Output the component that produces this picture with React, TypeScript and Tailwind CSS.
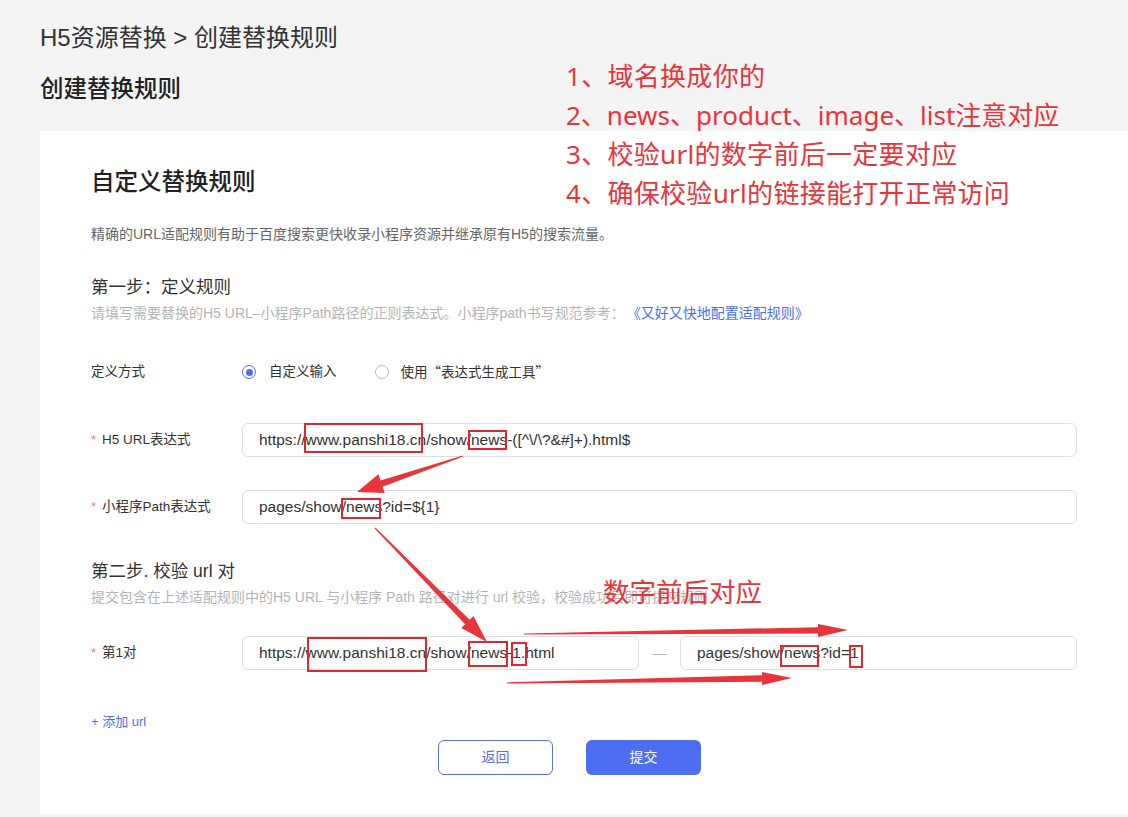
import React from "react";

const UI = { fontFamily: '"Liberation Sans", "Noto Sans CJK SC", sans-serif' };
const RED = { fontFamily: '"Noto Sans", "Noto Sans CJK SC", sans-serif' };
const CJK = { fontFamily: '"Noto Sans CJK SC", sans-serif' };

function arrowPoints(x0: number, y0: number, x1: number, y1: number, hl = 22, hw = 8, sw = 3.2, tw = 0.6) {
  const dx = x1 - x0;
  const dy = y1 - y0;
  const len = Math.hypot(dx, dy);
  const ux = dx / len;
  const uy = dy / len;
  const nx = -uy;
  const ny = ux;
  const bx = x1 - ux * hl;
  const by = y1 - uy * hl;
  const pts = [
    [x0 + nx * tw, y0 + ny * tw],
    [bx + nx * sw, by + ny * sw],
    [bx + nx * hw, by + ny * hw],
    [x1, y1],
    [bx - nx * hw, by - ny * hw],
    [bx - nx * sw, by - ny * sw],
    [x0 - nx * tw, y0 - ny * tw],
  ];
  return pts.map((p) => p[0].toFixed(1) + "," + p[1].toFixed(1)).join(" ");
}

const arrows = [
  { a: [463, 456, 357, 492], hl: 26, hw: 10 },
  { a: [375, 528, 487, 642], hl: 28, hw: 8.5 },
  { a: [524, 634, 848, 630], hl: 30, hw: 6.5 },
  { a: [507, 683, 792, 678], hl: 30, hw: 6.5 },
];

const boxes = [
  { l: 304, t: 423, w: 119, h: 30 },
  { l: 468, t: 430, w: 39, h: 20 },
  { l: 341, t: 498, w: 40, h: 21 },
  { l: 307, t: 637, w: 120, h: 35 },
  { l: 468, t: 641, w: 40, h: 26 },
  { l: 511, t: 642, w: 16, h: 24 },
  { l: 780, t: 645, w: 39, h: 22 },
  { l: 849, t: 645, w: 14, h: 23 },
];

function Label({ children, star = false }: { children: React.ReactNode; star?: boolean }) {
  return (
    <div className="w-[151px] shrink-0 flex items-center text-[13.5px] text-[#333]">
      {star && <span className="w-[11px] text-[#f08080]">*</span>}
      <span>{children}</span>
    </div>
  );
}

function Input({ children, className = "" }: { children: React.ReactNode; className?: string }) {
  return (
    <div
      className={
        "h-[34px] flex items-center rounded-[6px] border border-[#dcdfe6] bg-white pl-[16px] text-[15.5px] text-[#333] whitespace-nowrap " +
        className
      }
    >
      {children}
    </div>
  );
}

export default function App() {
  return (
    <div className="relative h-[817px] overflow-hidden bg-[#f4f4f4]" style={UI}>
      <div className="pl-[40px] pt-[24px]">
        <div className="h-[28px] leading-[28px] text-[24px] text-[#333]">H5资源替换 &gt; 创建替换规则</div>
        <div className="mt-[23px] h-[28px] leading-[28px] text-[23.5px] font-medium text-[#222]">创建替换规则</div>
      </div>

      <div className="ml-[40px] mt-[28px] h-[683px] bg-white pl-[51px] pr-[51px] pt-[35px]">
        <div className="h-[32px] leading-[32px] text-[23.5px] font-medium text-[#222]">自定义替换规则</div>
        <div className="mt-[26px] h-[20px] leading-[20px] text-[14px] text-[#666]">
          精确的URL适配规则有助于百度搜索更快收录小程序资源并继承原有H5的搜索流量。
        </div>

        <div className="mt-[31px] h-[24px] leading-[24px] text-[17.5px] text-[#333]">第一步：定义规则</div>
        <div className="mt-[4px] h-[20px] leading-[20px] text-[14px] text-[#b4b4b4] whitespace-nowrap">
          请填写需要替换的H5 URL–小程序Path路径的正则表达式。小程序path书写规范参考：
          <span className="ml-[9px] text-[#4e6ef2]">《又好又快地配置适配规则》</span>
        </div>

        <div className="mt-[39px] h-[20px] flex items-center">
          <Label>定义方式</Label>
          <div className="flex items-center text-[13.5px] text-[#333]">
            <span className="w-[14px] h-[14px] rounded-full border border-[#4e6ef2] flex items-center justify-center">
              <span className="w-[7px] h-[7px] rounded-full bg-[#4e6ef2]" />
            </span>
            <span className="ml-[13px]">自定义输入</span>
            <span className="ml-[38px] w-[14px] h-[14px] rounded-full border border-[#b8b8b8]" />
            <span className="ml-[12px]">
              使用<span style={CJK}>“</span>表达式生成工具<span style={CJK}>”</span>
            </span>
          </div>
        </div>

        <div className="mt-[41px] flex items-center">
          <Label star>H5 URL表达式</Label>
          <Input className="flex-1">{"https://www.panshi18.cn/show/news-([^\\/\\?&#]+).html$"}</Input>
        </div>

        <div className="mt-[33px] flex items-center">
          <Label star>小程序Path表达式</Label>
          <Input className="flex-1">{"pages/show/news?id=${1}"}</Input>
        </div>

        <div className="mt-[35px] h-[24px] leading-[24px] text-[17.5px] text-[#333]">第二步. 校验 url 对</div>
        <div className="mt-[4px] h-[20px] leading-[20px] text-[14px] text-[#b4b4b4] whitespace-nowrap">
          提交包含在上述适配规则中的H5 URL 与小程序 Path 路径对进行 url 校验，校验成功后即可提交规则
        </div>

        <div className="mt-[29px] flex items-center">
          <Label star>第1对</Label>
          <Input className="w-[397px]">https://www.panshi18.cn/show/news-1.html</Input>
          <div className="w-[41px] flex justify-center text-[14px] text-[#bbb]">—</div>
          <Input className="flex-1">pages/show/news?id=1</Input>
        </div>

        <div className="mt-[42px] h-[20px] leading-[20px] text-[13px] text-[#4e6ef2]">+ 添加 url</div>

        <div className="mt-[8px] flex pl-[347px] gap-[33px]">
          <button className="w-[115px] h-[35px] rounded-[6px] border border-[#5a6fd8] bg-white text-[14px] text-[#5a6fd8]">
            返回
          </button>
          <button className="w-[115px] h-[35px] rounded-[6px] bg-[#4e6ef2] text-[14px] text-white">提交</button>
        </div>
      </div>

      {/* annotations overlay */}
      <div
        className="absolute left-[566px] top-[57px] text-[26px] leading-[39px] tracking-[0.3px] text-[#e8343b] whitespace-nowrap"
        style={RED}
      >
        <div>1、域名换成你的</div>
        <div className="tracking-[0px]">2、news、product、image、list注意对应</div>
        <div>3、校验url的数字前后一定要对应</div>
        <div>4、确保校验url的链接能打开正常访问</div>
      </div>
      <div
        className="absolute left-[603px] top-[573px] text-[26.5px] leading-[38px] text-[#e8343b] whitespace-nowrap"
        style={RED}
      >
        数字前后对应
      </div>

      {boxes.map((b, i) => (
        <div
          key={i}
          className="absolute border-2 border-[#e0262e] pointer-events-none"
          style={{ left: b.l, top: b.t, width: b.w, height: b.h }}
        />
      ))}

      <svg className="absolute left-0 top-0 pointer-events-none" width="1128" height="817" viewBox="0 0 1128 817">
        {arrows.map((ar, i) => (
          <polygon
            key={i}
            points={arrowPoints(ar.a[0], ar.a[1], ar.a[2], ar.a[3], ar.hl, ar.hw)}
            fill="#e8343b"
          />
        ))}
      </svg>
    </div>
  );
}
